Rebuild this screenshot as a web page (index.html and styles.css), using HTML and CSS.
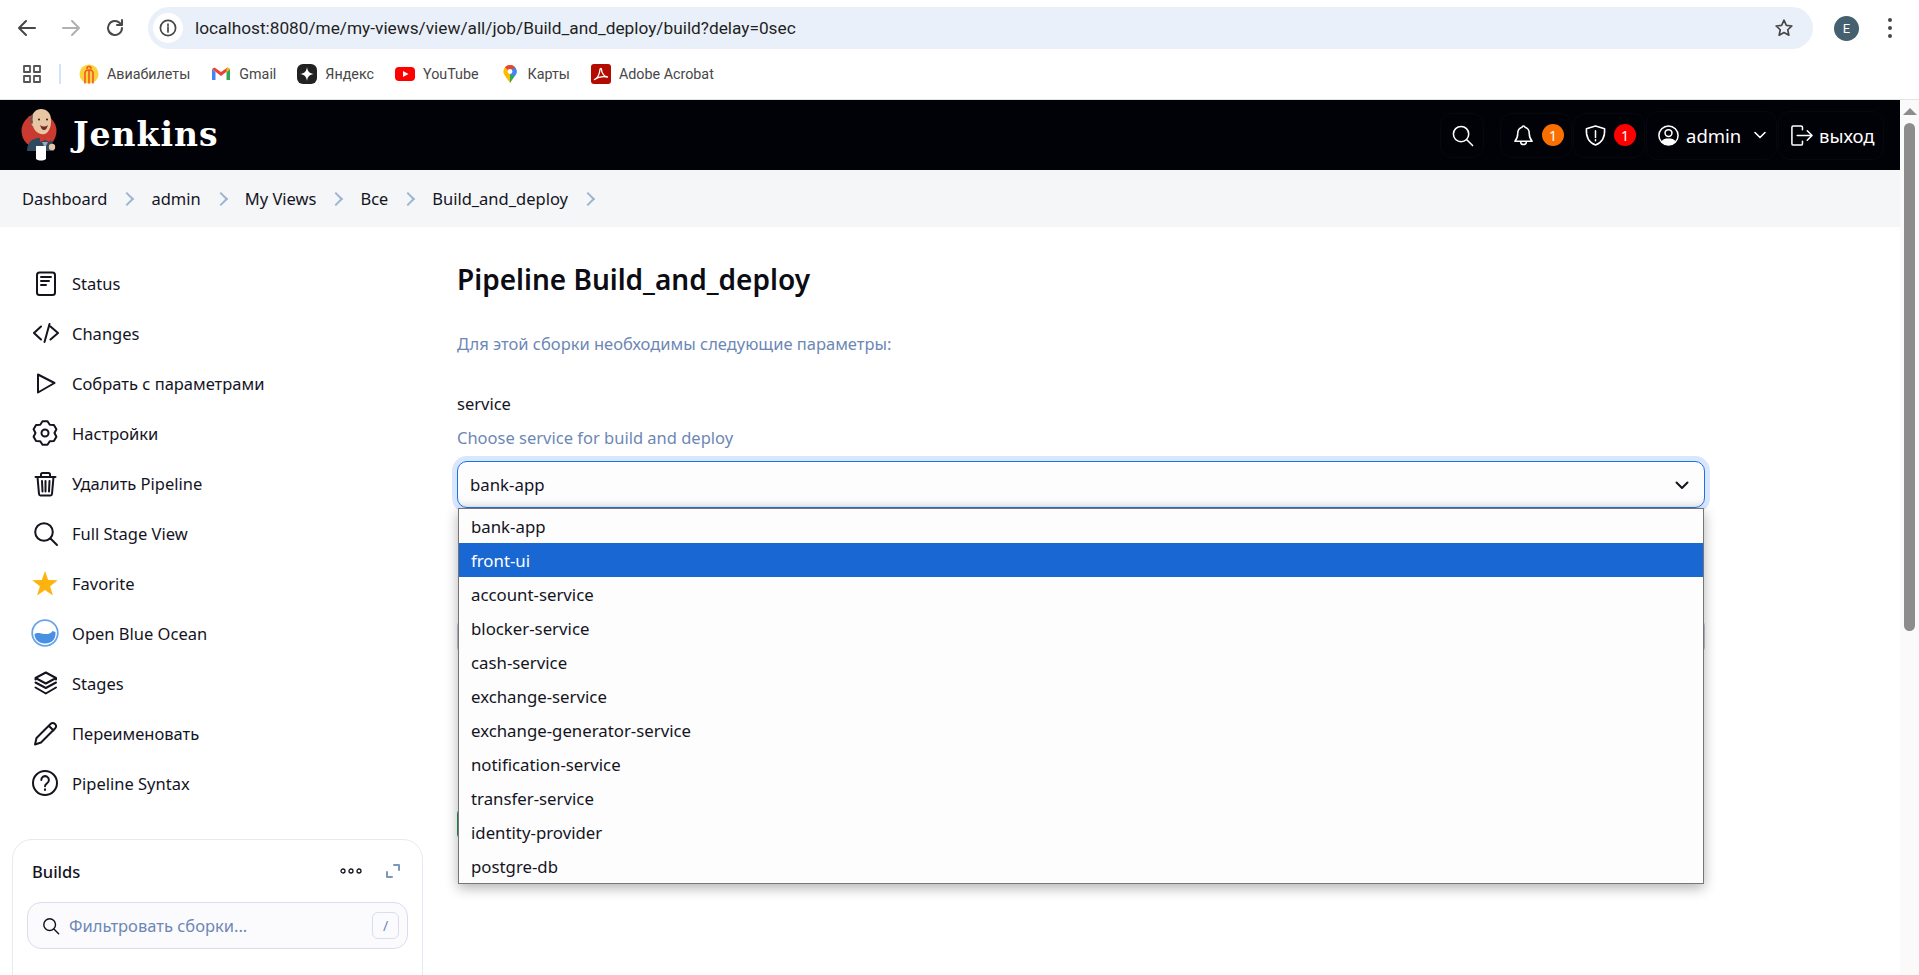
FILE: index.html
```html
<!DOCTYPE html>
<html lang="en">
<head>
    <meta charset="UTF-8">
    <meta name="viewport" content="width=device-width, initial-scale=1.0">
    <title>Build_and_deploy [Jenkins]</title>
    <link rel="stylesheet" href="styles.css">
</head>
<body>
<!-- Browser toolbar -->
<div class="toolbar">
    <svg class="nav-icon" viewBox="0 0 24 24"><path d="M20 12H5M11 5l-7 7 7 7"/></svg>
    <svg class="nav-icon nav-off" viewBox="0 0 24 24"><path d="M4 12h15M13 5l7 7-7 7"/></svg>
    <svg class="nav-icon" viewBox="0 0 24 24"><path d="M19 12a7 7 0 1 1-2.2-5.1L19 9M19 4v5h-5"/></svg>
    <div class="urlbar">
        <span class="url-info"><svg viewBox="0 0 20 20"><circle cx="10" cy="10" r="7.6"/><path d="M10 9v5M10 6v1.4"/></svg></span>
        <span class="url-text">localhost:8080/me/my-views/view/all/job/Build_and_deploy/build?delay=0sec</span>
        <svg class="url-star" viewBox="0 0 24 24"><path d="M12 3.5l2.6 5.6 6 .7-4.5 4.1 1.2 6L12 17l-5.3 2.9 1.2-6-4.5-4.1 6-.7z"/></svg>
    </div>
    <span class="avatar">E</span>
    <span class="kebab"><i></i><i></i><i></i></span>
</div>

<!-- Bookmarks -->
<div class="bookmarks">
    <svg class="apps" viewBox="0 0 20 20"><path d="M2 2h6v6H2zM12 2h6v6h-6zM2 12h6v6H2zM12 12h6v6h-6z"/></svg>
    <span class="bm-sep"></span>
    <a class="bm bm-avia"><svg viewBox="0 0 20 20"><circle cx="10" cy="10" r="9.5" fill="#fcd23c"/><path d="M6 19V9c0-2 1.500-3 4-3s4 1 4 3v10M10 6v13M8 4.500a2 2 0 1 1 4 0" fill="none" stroke="#ee5a24" stroke-width="1.600"/></svg>Авиабилеты</a>
    <a class="bm bm-gmail"><svg viewBox="0 0 20 20"><path d="M1 5v11h3.500V8z" fill="#4285f4"/><path d="M15.500 8v8H19V5z" fill="#34a853"/><path d="M1 5l9 7 9-7-2.500-1.500L10 8 3.500 3.500z" fill="#ea4335"/><path d="M15.500 8L19 5l-2-1.500-1.500 1z" fill="#fbbc04"/></svg>Gmail</a>
    <a class="bm bm-ya"><svg viewBox="0 0 20 20"><rect width="20" height="20" rx="6" fill="#222"/><path d="M10 3c.6 4.500 2.500 6.400 7 7-4.500.6-6.400 2.500-7 7-.6-4.500-2.500-6.400-7-7 4.500-.6 6.400-2.500 7-7z" fill="#fff"/></svg>Яндекс</a>
    <a class="bm bm-yt"><svg viewBox="0 0 20 20"><rect y="3" width="20" height="14" rx="4" fill="#f00"/><path d="M8 7l5.500 3L8 13z" fill="#fff"/></svg>YouTube</a>
    <a class="bm bm-maps"><svg viewBox="0 0 20 20"><path d="M10 1a6.500 6.500 0 0 0-5 10.700L10 19z" fill="#fbbc04"/><path d="M10 1a6.500 6.500 0 0 1 5 10.700L10 19z" fill="#34a853"/><path d="M5 3.300L10 8l5-4.700A6.500 6.500 0 0 0 10 1a6.500 6.500 0 0 0-5 2.300z" fill="#ea4335"/><path d="M15 3.300L10 8v3l5 .7a6.500 6.500 0 0 0 0-8.400z" fill="#4285f4"/><circle cx="10" cy="7.500" r="2.400" fill="#fff"/></svg>Карты</a>
    <a class="bm bm-pdf"><svg viewBox="0 0 20 20"><rect width="20" height="20" rx="3" fill="#b30b00"/><path d="M3.500 15.500c3-1.500 5-5 5.500-10 .1-1.500 1.500-1.500 1.500 0 0 4 3 7 6 7.500-3-.5-9-.5-13 2.500z" fill="none" stroke="#fff" stroke-width="1.300"/></svg>Adobe Acrobat</a>
</div>

<div class="viewport">
    <div class="page">
        <!-- Jenkins header -->
        <header class="jenkins-header">
            <a class="brand">
                <svg class="butler" viewBox="0 0 38 52">
                    <circle cx="18" cy="22" r="17.500" fill="#c93a30"/>
                    <path d="M6 42c0-8 4-12 11-13h7c6 1 9 5 9 11v2H6z" fill="#2e4a5e"/>
                    <path d="M11 9C11 4 15 0 20 0c6 0 10 4 10 11 0 3 0 7-2 10-2 4-5 5-8 4-4-1-7-4-8-8-2 0-2-6-1-8z" fill="#e8c6a4"/>
                    <path d="M11 16c-2-4-2-8 1-11 0 3-1 5 0 8z" fill="#5d5b5d"/>
                    <path d="M19 16c2.500 2 5 2 8 0-1 3-2 5-4 5s-3-2-4-5z" fill="#6f2a26"/>
                    <circle cx="18" cy="10.500" r="1" fill="#231f20"/><circle cx="26" cy="10.500" r="1" fill="#231f20"/>
                    <path d="M19 27l5 2.500 5-2.500v6l-5-2-5 2z" fill="#d33833"/>
                    <path d="M21 33h6l-3 6z" fill="#9ab"/>
                    <path d="M15 37h10v13c-3 2-7 2-10 0z" fill="#fff"/>
                    <circle cx="31" cy="38" r="3.200" fill="#e8c6a4"/>
                </svg>
                <span class="brand-name">Jenkins</span>
            </a>
            <div class="head-actions">
                <a class="head-btn btn-search"><svg viewBox="0 0 24 24"><circle cx="10.500" cy="10.500" r="8"/><path d="M16.500 16.500l6 6"/></svg></a>
                <a class="head-btn btn-bell"><svg viewBox="0 0 24 24"><path d="M12 2c1 0 1.500.6 1.500 1.500 3 .8 4.500 3.300 4.500 6.500 0 4 .6 5.500 3 8H3c2.400-2.500 3-4 3-8 0-3.200 1.500-5.700 4.500-6.500C10.500 2.600 11 2 12 2zM9 18.500c0 4 6 4 6 0"/></svg><span class="badge badge-orange">1</span></a>
                <a class="head-btn btn-shield"><svg viewBox="0 0 24 24"><path d="M12 2l9.500 3c.5 8-1.500 14-9.500 17C4 19 2 13 2.500 5zM12 7v7M12 16.500v1"/></svg><span class="badge badge-red">1</span></a>
                <a class="head-btn btn-user"><svg viewBox="0 0 24 24"><circle cx="12" cy="12" r="10"/><circle cx="12" cy="9.500" r="3.600"/><path class="solid" d="M4.500 18.500C6 15.500 9 15 12 15s6 .5 7.500 3.500C17.500 21 15 22 12 22s-5.500-1-7.500-3.500z"/></svg><span class="head-label">admin</span><svg class="head-chev" viewBox="0 0 16 16"><path d="M3 5.500l5 5 5-5"/></svg></a>
                <a class="head-btn btn-logout"><svg viewBox="0 0 24 24"><path d="M13 6V3.500C13 2.500 12.500 2 11.500 2H3.500C2.500 2 2 2.500 2 3.500v17c0 1 .5 1.500 1.500 1.500h8c1 0 1.500-.5 1.500-1.500V18M7.500 12H23M18 7l5 5-5 5"/></svg><span class="head-label">выход</span></a>
            </div>
        </header>

        <nav class="breadcrumbs">
            <a>Dashboard</a><span class="crumb-sep"></span>
            <a>admin</a><span class="crumb-sep"></span>
            <a>My Views</a><span class="crumb-sep"></span>
            <a>Все</a><span class="crumb-sep"></span>
            <a>Build_and_deploy</a><span class="crumb-sep"></span>
        </nav>

        <div class="layout">
            <aside class="side">
                <ul class="tasks">
                    <li><svg viewBox="0 0 28 28"><rect x="6" y="3.500" width="18" height="22.500" rx="2.500"/><path d="M10 8h10M10 12h8M10 16h5"/></svg>Status</li>
                    <li><svg viewBox="0 0 28 28"><path d="M10 7.500L3 14l7 6.500M18.500 5l-5 18M19.500 7.500L27 14l-7.500 6.500"/></svg>Changes</li>
                    <li><svg viewBox="0 0 28 28"><path d="M7 5.500L23.500 14 7 23.500z"/></svg>Собрать с параметрами</li>
                    <li><svg viewBox="0 0 28 28"><path d="M11.500 2.300h5l2.250 3.470 4.170.2 2.490 4.320-1.910 3.710 1.910 3.710-2.490 4.320-4.170.2-2.250 3.510h-5l-2.250-3.510-4.170-.2-2.490-4.320 1.910-3.710-1.910-3.710 2.490-4.320 4.170-.2z"/><circle cx="14" cy="14" r="3.500"/></svg>Настройки</li>
                    <li><svg viewBox="0 0 28 28"><path d="M4.500 8h20M10 7.500V5.500C10 4.300 10.500 4 11.500 4h6c1 0 1.500.3 1.500 1.500v2M6.500 8l1.500 17c.1 1 .7 1.500 1.500 1.500h10c.8 0 1.400-.5 1.500-1.500l1.500-17M11 12l.5 10.500M14.500 12v10.500M18.500 12L18 22.500"/></svg>Удалить Pipeline</li>
                    <li><svg viewBox="0 0 28 28"><circle cx="13" cy="13" r="8.800"/><path d="M19.500 19.500L26 26"/></svg>Full Stage View</li>
                    <li><svg class="star" viewBox="0 0 28 28"><path d="M14 2l3.200 9.100 9.600.2-7.700 5.900 2.800 9.200-7.900-5.500-7.900 5.500 2.800-9.200-7.700-5.900 9.600-.2z"/></svg>Favorite</li>
                    <li><svg class="ocean" viewBox="0 0 28 28"><circle cx="14" cy="14" r="12.800"/><path class="wave" d="M3.500 15c3-2 6-.5 10 0 3.500.4 6.500-.5 8-3l3 1c.5 8-4.500 11.500-10.500 11.500S3.500 20.500 3.500 15z"/></svg>Open Blue Ocean</li>
                    <li><svg viewBox="0 0 28 28"><path d="M14.800 3.500L25 9l-10.200 5.500L4.500 9zM4.500 9v1.500M25 9v1.500M4.500 13.500l10.300 5.500L25 13.500M4.500 18.500l10.300 6L25 18.500"/></svg>Stages</li>
                    <li><svg viewBox="0 0 28 28"><path d="M4 25.500l1.500-6.500L19.500 5c1.500-1.500 3-1.500 4.500 0s1.500 3 0 4.500L10 23.500zM18 7l4.500 4.500"/></svg>Переименовать</li>
                    <li><svg viewBox="0 0 28 28"><circle cx="14" cy="14" r="12"/><path d="M10.300 11a3.800 3.800 0 1 1 5.800 3.200c-1.300.9-2.100 1.500-2.100 3.100M14 20.300v.6"/></svg>Pipeline Syntax</li>
                </ul>

                <section class="builds-card">
                    <div class="builds-head">
                        <span class="builds-title">Builds</span>
                        <svg class="builds-dots" viewBox="0 0 22 8"><circle cx="3" cy="4" r="2"/><circle cx="11" cy="4" r="2"/><circle cx="19" cy="4" r="2"/></svg>
                        <svg class="builds-expand" viewBox="0 0 16 16"><path d="M9 2h5v5M2 9v5h5"/></svg>
                    </div>
                    <div class="builds-search">
                        <svg viewBox="0 0 20 20"><circle cx="8.500" cy="8.500" r="6.500"/><path d="M13.500 13.500l5 5"/></svg>
                        <span class="builds-placeholder">Фильтровать сборки...</span>
                        <span class="kbd">/</span>
                    </div>
                    <div class="builds-day">Today</div>
                </section>
            </aside>

            <main class="content">
                <h1>Pipeline Build_and_deploy</h1>
                <p class="hint">Для этой сборки необходимы следующие параметры:</p>
                <div class="param-name">service</div>
                <div class="param-desc">Choose service for build and deploy</div>
                <div class="select-wrap">
                    <div class="select-box">
                        <span>bank-app</span>
                        <svg viewBox="0 0 16 16"><path d="M2.500 5.500L8 11l5.500-5.500"/></svg>
                    </div>
                    <ul class="select-list">
                        <li>bank-app</li>
                        <li class="active">front-ui</li>
                        <li>account-service</li>
                        <li>blocker-service</li>
                        <li>cash-service</li>
                        <li>exchange-service</li>
                        <li>exchange-generator-service</li>
                        <li>notification-service</li>
                        <li>transfer-service</li>
                        <li>identity-provider</li>
                        <li>postgre-db</li>
                    </ul>
                </div>
                <!-- Rest of the form, behind the open list -->
                <div class="next-field"></div>
                <button class="build-btn" type="button" aria-label="Собрать"></button>
            </main>
        </div>
    </div>
    <div class="scrollbar">
        <span class="scroll-up"></span>
        <span class="scroll-thumb"></span>
    </div>
</div>
</body>
</html>
```
FILE: styles.css
```css
* {
    box-sizing: border-box;
}

html, body {
    margin: 0;
    height: 975px;
    overflow: hidden;
    background: #fff;
}

body {
    font-family: "Noto Sans", "Open Sans", sans-serif;
    font-size: 16.5px;
    color: #14141f;
}

ul {
    list-style: none;
    margin: 0;
    padding: 0;
}

svg {
    flex: none;
    fill: none;
    stroke: currentColor;
    stroke-linecap: round;
    stroke-linejoin: round;
}

/* Browser toolbar */
.toolbar {
    display: flex;
    align-items: center;
    height: 56px;
    padding-left: 15px;
    color: #474747;
}

.nav-icon {
    width: 24px;
    height: 24px;
    margin-right: 20px;
    stroke-width: 2;
}

.nav-off {
    color: #b0b0b0;
}

.urlbar {
    display: flex;
    align-items: center;
    width: 1665px;
    height: 42px;
    margin-left: 1px;
    padding: 0 18px 0 5px;
    border-radius: 21px;
    background: #eaf0f9;
}

.url-info {
    display: flex;
    align-items: center;
    justify-content: center;
    width: 30px;
    height: 30px;
    border-radius: 50%;
    background: #fff;
}

.url-info svg {
    width: 20px;
    height: 20px;
    stroke-width: 1.700;
}

.url-text {
    flex: 1;
    margin-left: 12px;
    font-family: "Roboto", sans-serif;
    font-size: 17.25px;
    color: #1f1f1f;
}

.url-star {
    width: 22px;
    height: 22px;
    stroke-width: 1.800;
}

.avatar {
    display: flex;
    align-items: center;
    justify-content: center;
    width: 25px;
    height: 25px;
    margin-left: 21px;
    border-radius: 50%;
    background: #45606e;
    color: #fff;
    font-family: "Roboto", sans-serif;
    font-size: 13px;
}

.kebab {
    display: flex;
    flex-direction: column;
    gap: 4px;
    margin-left: 29px;
}

.kebab i {
    width: 4px;
    height: 4px;
    border-radius: 50%;
    background: #474747;
}

/* Bookmarks */
.bookmarks {
    display: flex;
    align-items: center;
    height: 44px;
    padding: 0 0 8px 22px;
    border-bottom: 1px solid #e1e3e6;
    font-family: "Roboto", sans-serif;
    font-size: 14.3px;
    color: #474747;
}

.apps {
    width: 20px;
    height: 20px;
    stroke-width: 1.800;
    stroke: #555;
}

.bm-sep {
    width: 2px;
    height: 20px;
    margin: 0 18px 0 17px;
    background: #d3e3fd;
}

.bm {
    display: flex;
    align-items: center;
    gap: 8px;
    margin-right: 21px;
    white-space: nowrap;
}

.bm svg {
    width: 20px;
    height: 20px;
    stroke: none;
}

/* Page area + scrollbar */
.viewport {
    display: flex;
    height: 875px;
}

.page {
    flex: 1;
    min-width: 0;
    overflow: hidden;
}

.scrollbar {
    display: flex;
    flex-direction: column;
    align-items: center;
    width: 19px;
    padding-top: 8px;
    background: #fafafa;
}

.scroll-up {
    border-left: 7px solid transparent;
    border-right: 7px solid transparent;
    border-bottom: 7px solid #8c8c8c;
}

.scroll-thumb {
    width: 11px;
    height: 508px;
    margin-top: 8px;
    border-radius: 6px;
    background: #8c8c8c;
}

/* Jenkins header */
.jenkins-header {
    display: flex;
    align-items: center;
    justify-content: space-between;
    height: 70px;
    padding: 0 16px 0 21px;
    background: #010108;
    color: #fff;
}

.brand {
    display: flex;
    align-items: center;
    gap: 14px;
}

.butler {
    width: 38px;
    height: 52px;
    stroke: none;
}

.brand-name {
    margin-top: -2px;
    font-family: "DejaVu Serif", serif;
    font-weight: 700;
    font-size: 33px;
    letter-spacing: 1px;
}

.head-actions {
    display: flex;
    align-items: center;
    gap: 1px;
}

.head-btn {
    display: flex;
    align-items: center;
    height: 45px;
    border: 1px solid #07070f;
    border-radius: 12px;
}

.head-btn svg {
    width: 23px;
    height: 23px;
    stroke-width: 1.600;
}

.btn-search {
    width: 44px;
    margin-right: 15px;
    justify-content: center;
}

.btn-bell {
    width: 72px;
    padding-left: 11px;
}

.btn-shield {
    width: 72px;
    padding-left: 10px;
}

.btn-user {
    width: 131px;
    height: 49px;
    padding-left: 10px;
}

.btn-logout {
    width: 106px;
    height: 49px;
    padding-left: 11px;
}

.head-btn .solid {
    fill: #fff;
    stroke: none;
}

.badge {
    display: flex;
    align-items: center;
    justify-content: center;
    width: 22px;
    height: 22px;
    margin-left: 7px;
    border-radius: 50%;
    font-size: 14px;
    color: #fff;
}

.badge-orange {
    background: #fa7000;
}

.badge-red {
    background: #f00;
}

.head-label {
    margin-left: 6px;
    font-size: 18.500px;
}

.head-btn .head-chev {
    width: 16px;
    height: 16px;
    margin-left: 11px;
}

/* Breadcrumbs */
.breadcrumbs {
    display: flex;
    align-items: center;
    height: 57px;
    padding-left: 22px;
    background: #f5f6f8;
}

.crumb-sep {
    width: 10px;
    height: 10px;
    margin: 0 19px 0 15px;
    border-top: 2px solid #9db4d4;
    border-right: 2px solid #9db4d4;
    transform: rotate(45deg);
}

/* Sidebar */
.layout {
    display: flex;
}

.side {
    flex: none;
    width: 457px;
    padding: 31px 34px 0 12px;
}

.tasks li {
    display: flex;
    align-items: center;
    gap: 13px;
    height: 50px;
    padding-left: 19px;
}

.tasks svg {
    width: 28px;
    height: 28px;
    stroke-width: 2;
    color: #14141f;
}

.tasks .star {
    fill: #fdb30d;
    stroke: none;
}

.tasks .ocean {
    fill: #fff;
    stroke: #68a4ec;
    stroke-width: 1.800;
}

.ocean .wave {
    fill: #4a90e2;
    stroke: none;
}

.builds-card {
    margin-top: 31px;
    padding: 19px 14px 40px;
    border: 1px solid #e6e9f2;
    border-radius: 20px;
}

.builds-head {
    display: flex;
    align-items: center;
    height: 24px;
    margin-bottom: 19px;
    padding: 0 5px;
}

.builds-title {
    flex: 1;
    font-weight: 500;
}

.builds-dots {
    width: 22px;
    height: 8px;
    stroke-width: 1.300;
}

.builds-expand {
    width: 16px;
    height: 16px;
    margin: 0 2px 0 23px;
    stroke: #7f96bb;
    stroke-width: 2;
}

.builds-search {
    display: flex;
    align-items: center;
    height: 47px;
    padding: 0 8px 0 14px;
    border: 1.500px solid #d7deed;
    border-radius: 14px;
    background: #fbfbfe;
}

.builds-search svg {
    width: 18px;
    height: 18px;
    stroke-width: 1.600;
}

.builds-placeholder {
    flex: 1;
    margin-left: 9px;
    color: #6d87b5;
}

.kbd {
    display: flex;
    align-items: center;
    justify-content: center;
    width: 27px;
    height: 27px;
    border: 1px solid #d7deed;
    border-radius: 6px;
    color: #6d87b5;
    font-size: 14px;
}

.builds-day {
    margin-top: 22px;
    color: #6d87b5;
    font-weight: 500;
}

/* Main content */
.content {
    width: 1248px;
    padding-top: 35px;
}

h1 {
    margin: 0 0 35px;
    font-size: 28px;
    line-height: 35px;
    font-weight: 600;
    color: #0c0c14;
}

.hint {
    margin: 0 0 36px;
    line-height: 24px;
    color: #6d87b5;
}

.param-name {
    margin-bottom: 10px;
    line-height: 24px;
}

.param-desc {
    margin-bottom: 11px;
    line-height: 24px;
    color: #6d87b5;
}

/* Open select */
.select-wrap {
    position: relative;
}

.select-box {
    display: flex;
    align-items: center;
    justify-content: space-between;
    height: 47px;
    padding: 0 14px 0 12px;
    border: 1px solid #1a73e8;
    border-radius: 10px;
    background: #fdfdfe;
    box-shadow: 0 0 0 5px #d9e6fd, inset 0 -8px 8px -8px rgba(0, 0, 0, 0.12);
    font-size: 16.8px;
}

.select-box svg {
    width: 16px;
    height: 16px;
    stroke-width: 2;
}

.select-list {
    position: absolute;
    z-index: 5;
    top: 47px;
    left: 1px;
    right: 1px;
    border: 1px solid #767676;
    background: #fdfdfd;
    box-shadow: 0 4px 12px rgba(0, 0, 0, 0.3);
    font-size: 16.8px;
}

.select-list li {
    display: flex;
    align-items: center;
    height: 34px;
    padding-left: 12px;
}

.select-list .active {
    background: #1967d2;
    color: #fff;
}

.next-field {
    height: 33px;
    margin-top: 112px;
    border: 1px solid #bcc6d8;
    border-radius: 6px;
}

.build-btn {
    display: block;
    width: 120px;
    height: 32px;
    margin-top: 155px;
    border: none;
    border-radius: 6px;
    background: #2e8b60;
}
```
